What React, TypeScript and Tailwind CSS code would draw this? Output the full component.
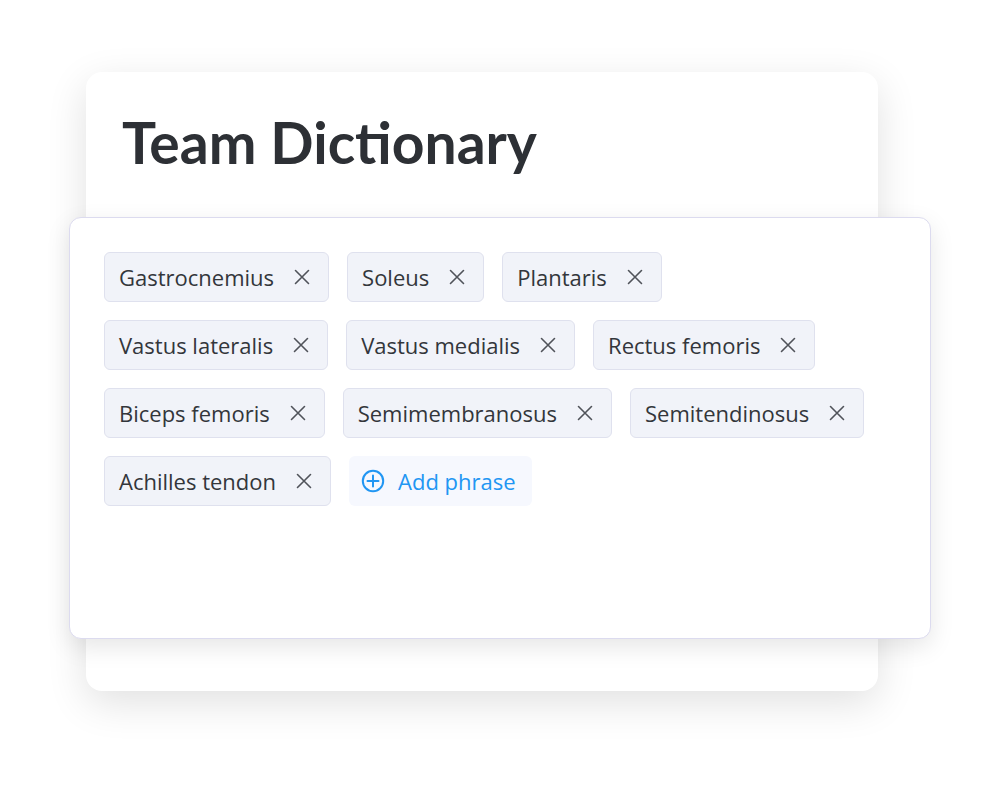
const phrases = [
  "Gastrocnemius",
  "Soleus",
  "Plantaris",
  "Vastus lateralis",
  "Vastus medialis",
  "Rectus femoris",
  "Biceps femoris",
  "Semimembranosus",
  "Semitendinosus",
  "Achilles tendon",
];

function CloseIcon() {
  return (
    <svg width="16" height="16" viewBox="0 0 16 16" fill="none" stroke="#50535a" strokeWidth="1.6" strokeLinecap="round">
      <path d="M1.5 1.5 14.5 14.5M14.5 1.5 1.5 14.5" />
    </svg>
  );
}

function PlusCircleIcon() {
  return (
    <svg width="24" height="24" viewBox="0 0 24 24" fill="none" stroke="#2196f3" strokeWidth="2" strokeLinecap="round">
      <circle cx="12" cy="12" r="10.2" />
      <path d="M12 6.5v11M6.5 12h11" />
    </svg>
  );
}

function Chip({ label }: { label: string }) {
  return (
    <div className="flex h-[50px] items-center gap-[20px] rounded-[6px] border border-[#dfe1ee] bg-[#f1f3f9] pl-[14px] pr-[18px] font-['Open_Sans',sans-serif] text-[22px] text-[#33363b]">
      <span>{label}</span>
      <CloseIcon />
    </div>
  );
}

export default function App() {
  return (
    <div className="min-h-[800px] w-[1000px] bg-white pt-[72px] font-['Lato',sans-serif]">
      <div className="ml-[86px] flex w-[792px] flex-col rounded-[16px] bg-white pb-[52px] pl-[36px] pt-[41px] shadow-[0_12px_40px_rgba(0,0,0,0.12)]">
        <h1 className="mb-[46px] text-[57px] font-bold leading-[58px] text-[#2d3035]">Team Dictionary</h1>
        <div className="-mr-[53px] ml-[-53px] h-[422px] rounded-[12px] border border-[#dcdbef] bg-white py-[34px] pl-[34px] pr-[40px] shadow-[0_8px_24px_rgba(0,0,0,0.1)]">
          <div className="flex flex-wrap gap-[18px]">
            {phrases.map((p) => (
              <Chip key={p} label={p} />
            ))}
            <button className="flex h-[50px] items-center gap-[13px] rounded-[6px] bg-[#f6f8fe] pl-[12px] pr-[16px] font-['Open_Sans',sans-serif] text-[22px] text-[#2196f3]">
              <PlusCircleIcon />
              <span>Add phrase</span>
            </button>
          </div>
        </div>
      </div>
    </div>
  );
}
